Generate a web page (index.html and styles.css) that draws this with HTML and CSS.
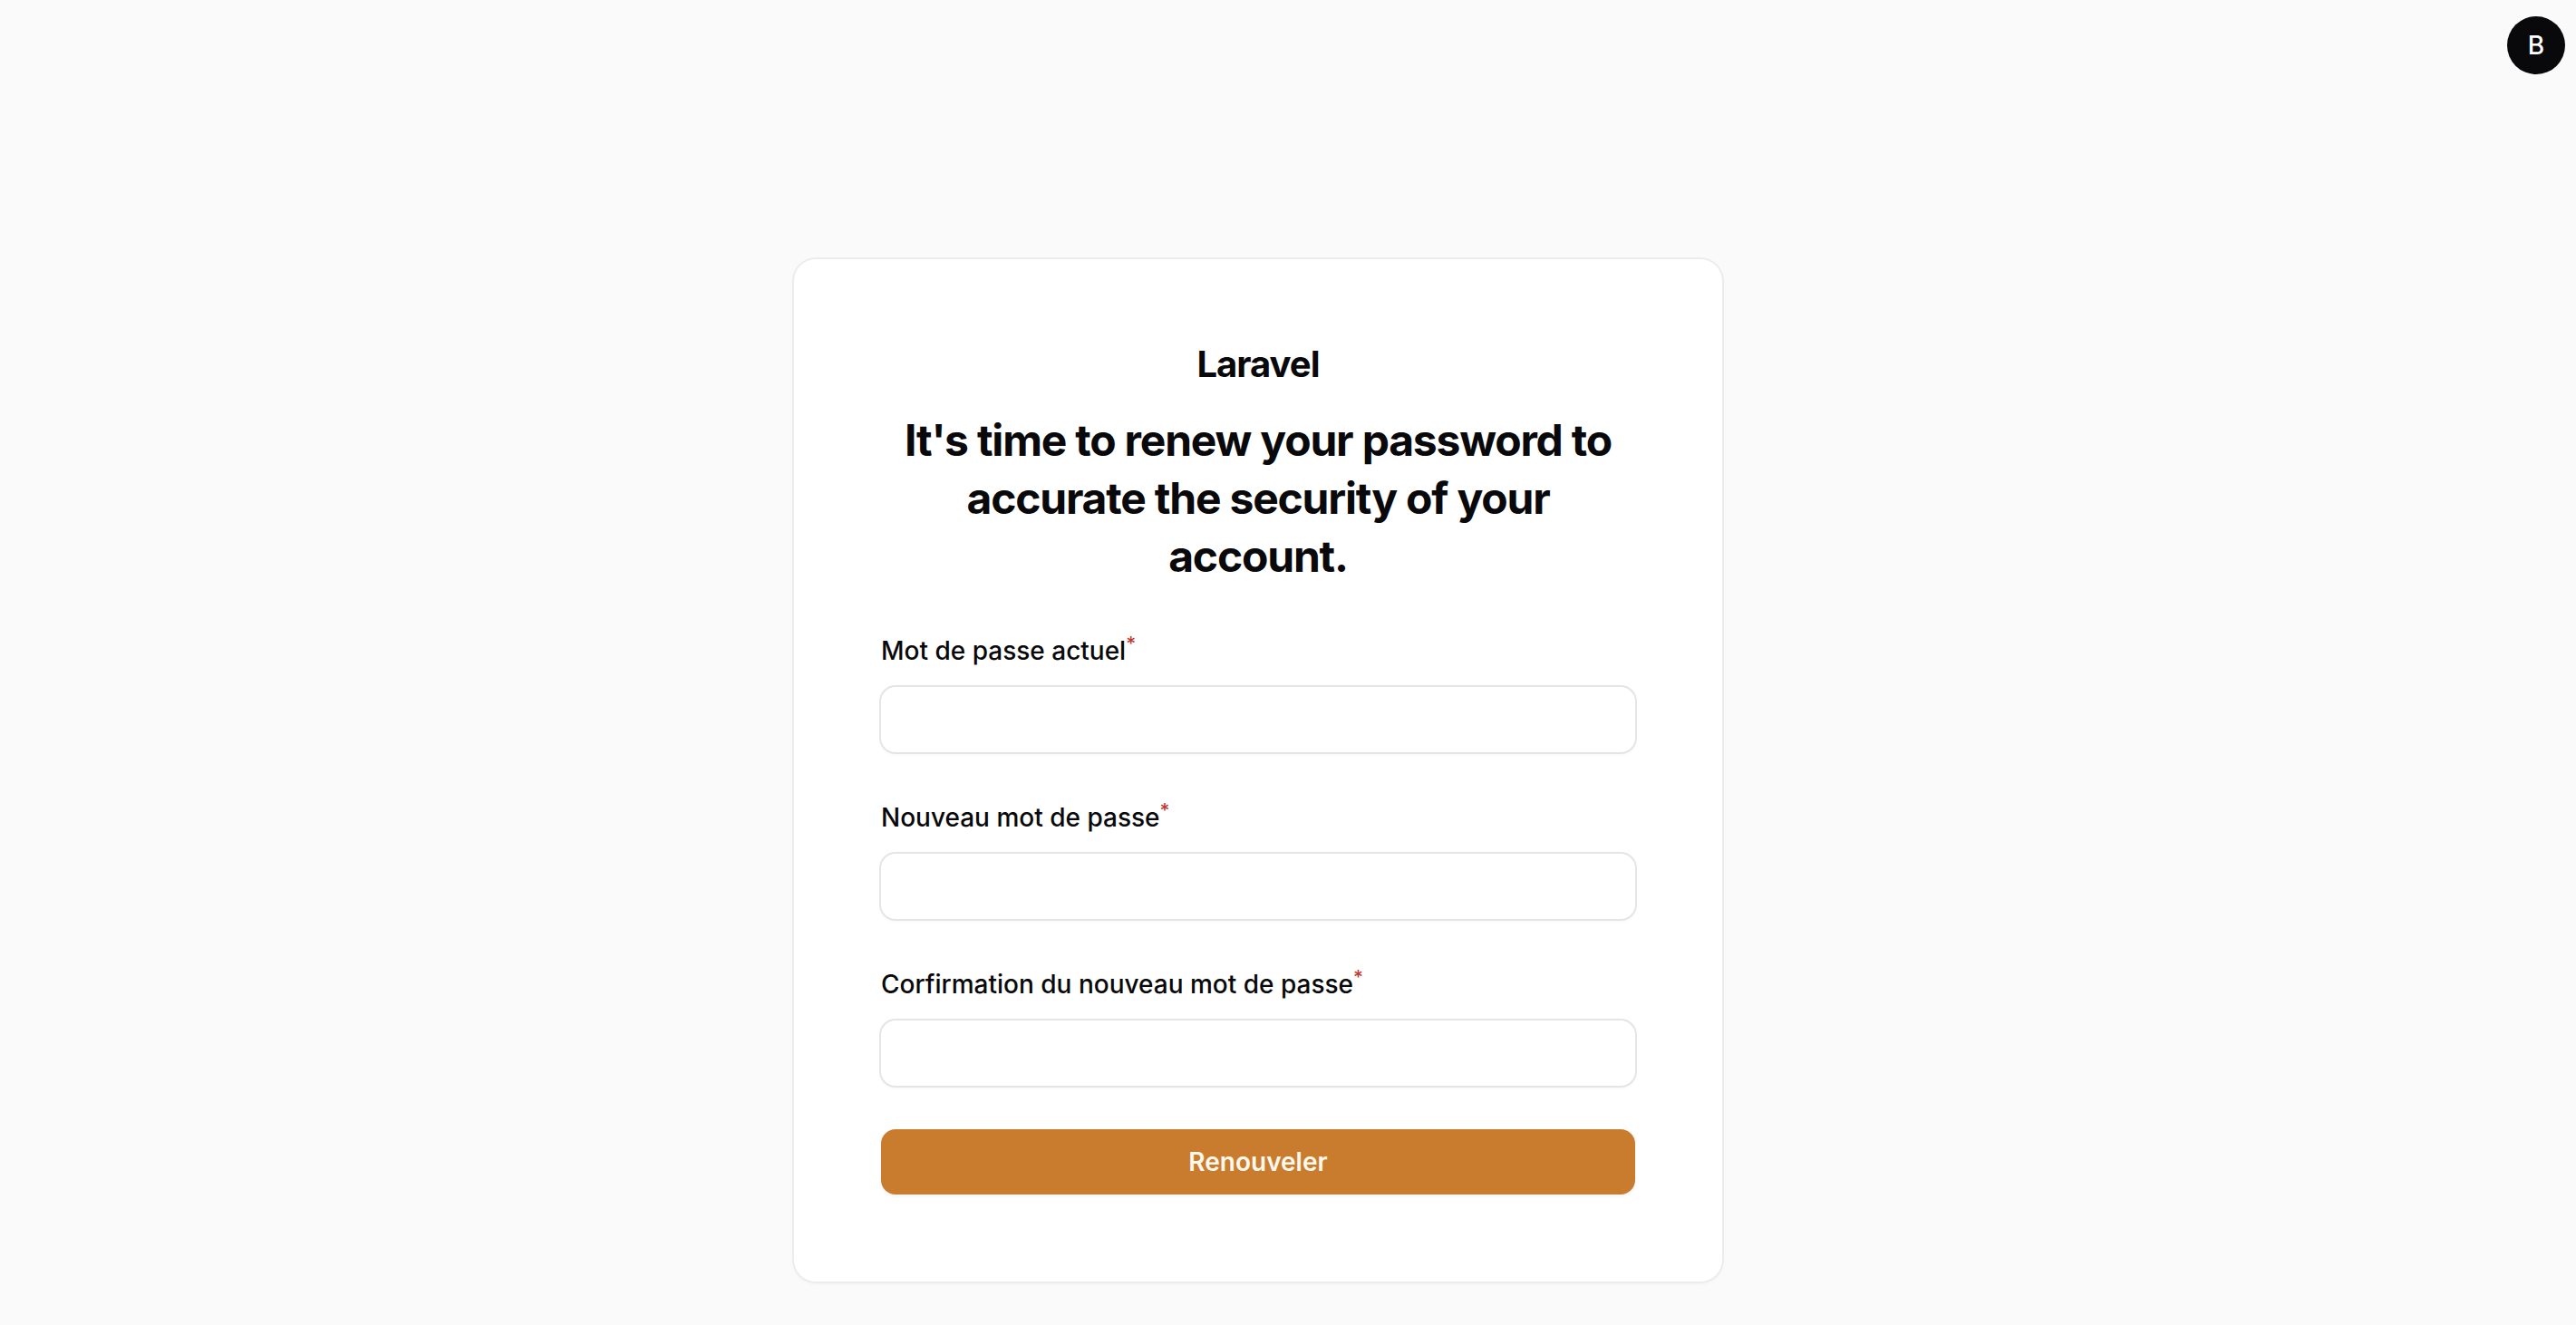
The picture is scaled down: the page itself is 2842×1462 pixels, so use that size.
FILE: index.html
```html
<!DOCTYPE html>
<html lang="fr">
<head>
  <meta charset="utf-8">
  <meta name="viewport" content="width=device-width, initial-scale=1">
  <title>Laravel</title>
  <link rel="stylesheet" href="styles.css">
</head>
<body>
  <header class="topbar">
    <button class="avatar" type="button">B</button>
  </header>
  <main class="page">
    <section class="card">
      <header class="card-header">
        <div class="logo">Laravel</div>
        <h1 class="heading">It's time to renew your password to accurate the security of your account.</h1>
      </header>
      <form class="form">
        <div class="field">
          <label class="label" for="current">Mot de passe actuel<sup class="required">*</sup></label>
          <input class="input" id="current" type="password" required>
        </div>
        <div class="field">
          <label class="label" for="new">Nouveau mot de passe<sup class="required">*</sup></label>
          <input class="input" id="new" type="password" required>
        </div>
        <div class="field">
          <label class="label" for="confirm">Corfirmation du nouveau mot de passe<sup class="required">*</sup></label>
          <input class="input" id="confirm" type="password" required>
        </div>
        <button class="submit" type="submit">Renouveler</button>
      </form>
    </section>
  </main>
</body>
</html>
```

FILE: styles.css
```css
*,
*::before,
*::after {
  box-sizing: border-box;
}

body {
  margin: 0;
  min-height: 100vh;
  background: #fafafa;
  color: #09090b;
  font-family: Inter, "Liberation Sans", sans-serif;
  font-size: 28px;
  line-height: 48px;
}

.topbar {
  display: flex;
  justify-content: flex-end;
  padding: 18px 12px;
}

.avatar {
  width: 64px;
  height: 64px;
  padding: 0;
  border: 0;
  border-radius: 50%;
  background: #09090b;
  color: #fff;
  font: inherit;
  font-weight: 500;
}

.page {
  display: flex;
  justify-content: center;
  padding: 186px 66px 48px 0;
}

.card {
  width: 100%;
  max-width: 1024px;
  padding: 96px;
  border-radius: 24px;
  background: #fff;
  box-shadow: 0 0 0 2px #ececec, 0 2px 4px 0 rgb(0 0 0 / 5%);
}

.card-header {
  display: flex;
  flex-direction: column;
  gap: 32px;
  margin-bottom: 48px;
  text-align: center;
}

.logo {
  font-size: 40px;
  font-weight: 700;
  line-height: 40px;
  letter-spacing: -0.025em;
}

.heading {
  margin: 0;
  font-size: 48px;
  font-weight: 700;
  line-height: 64px;
  letter-spacing: -0.025em;
}

.form {
  display: flex;
  flex-direction: column;
  gap: 48px;
}

.field {
  display: flex;
  flex-direction: column;
  gap: 16px;
}

.label {
  font-weight: 500;
}

.required {
  position: relative;
  top: -10px;
  color: #c03a35;
  font-size: 21px;
  line-height: 0;
  vertical-align: baseline;
}

.input {
  width: 100%;
  height: 72px;
  padding: 12px 24px;
  border: 0;
  border-radius: 16px;
  outline: 0;
  background: #fff;
  box-shadow: 0 0 0 2px #e5e5e5, 0 2px 4px 0 rgb(0 0 0 / 5%);
  font: inherit;
}

.submit {
  height: 72px;
  padding: 0 24px;
  border: 0;
  border-radius: 16px;
  background: #ca7c2e;
  color: #fff8ec;
  box-shadow: 0 2px 4px 0 rgb(0 0 0 / 5%);
  font: inherit;
  font-weight: 600;
}
```
